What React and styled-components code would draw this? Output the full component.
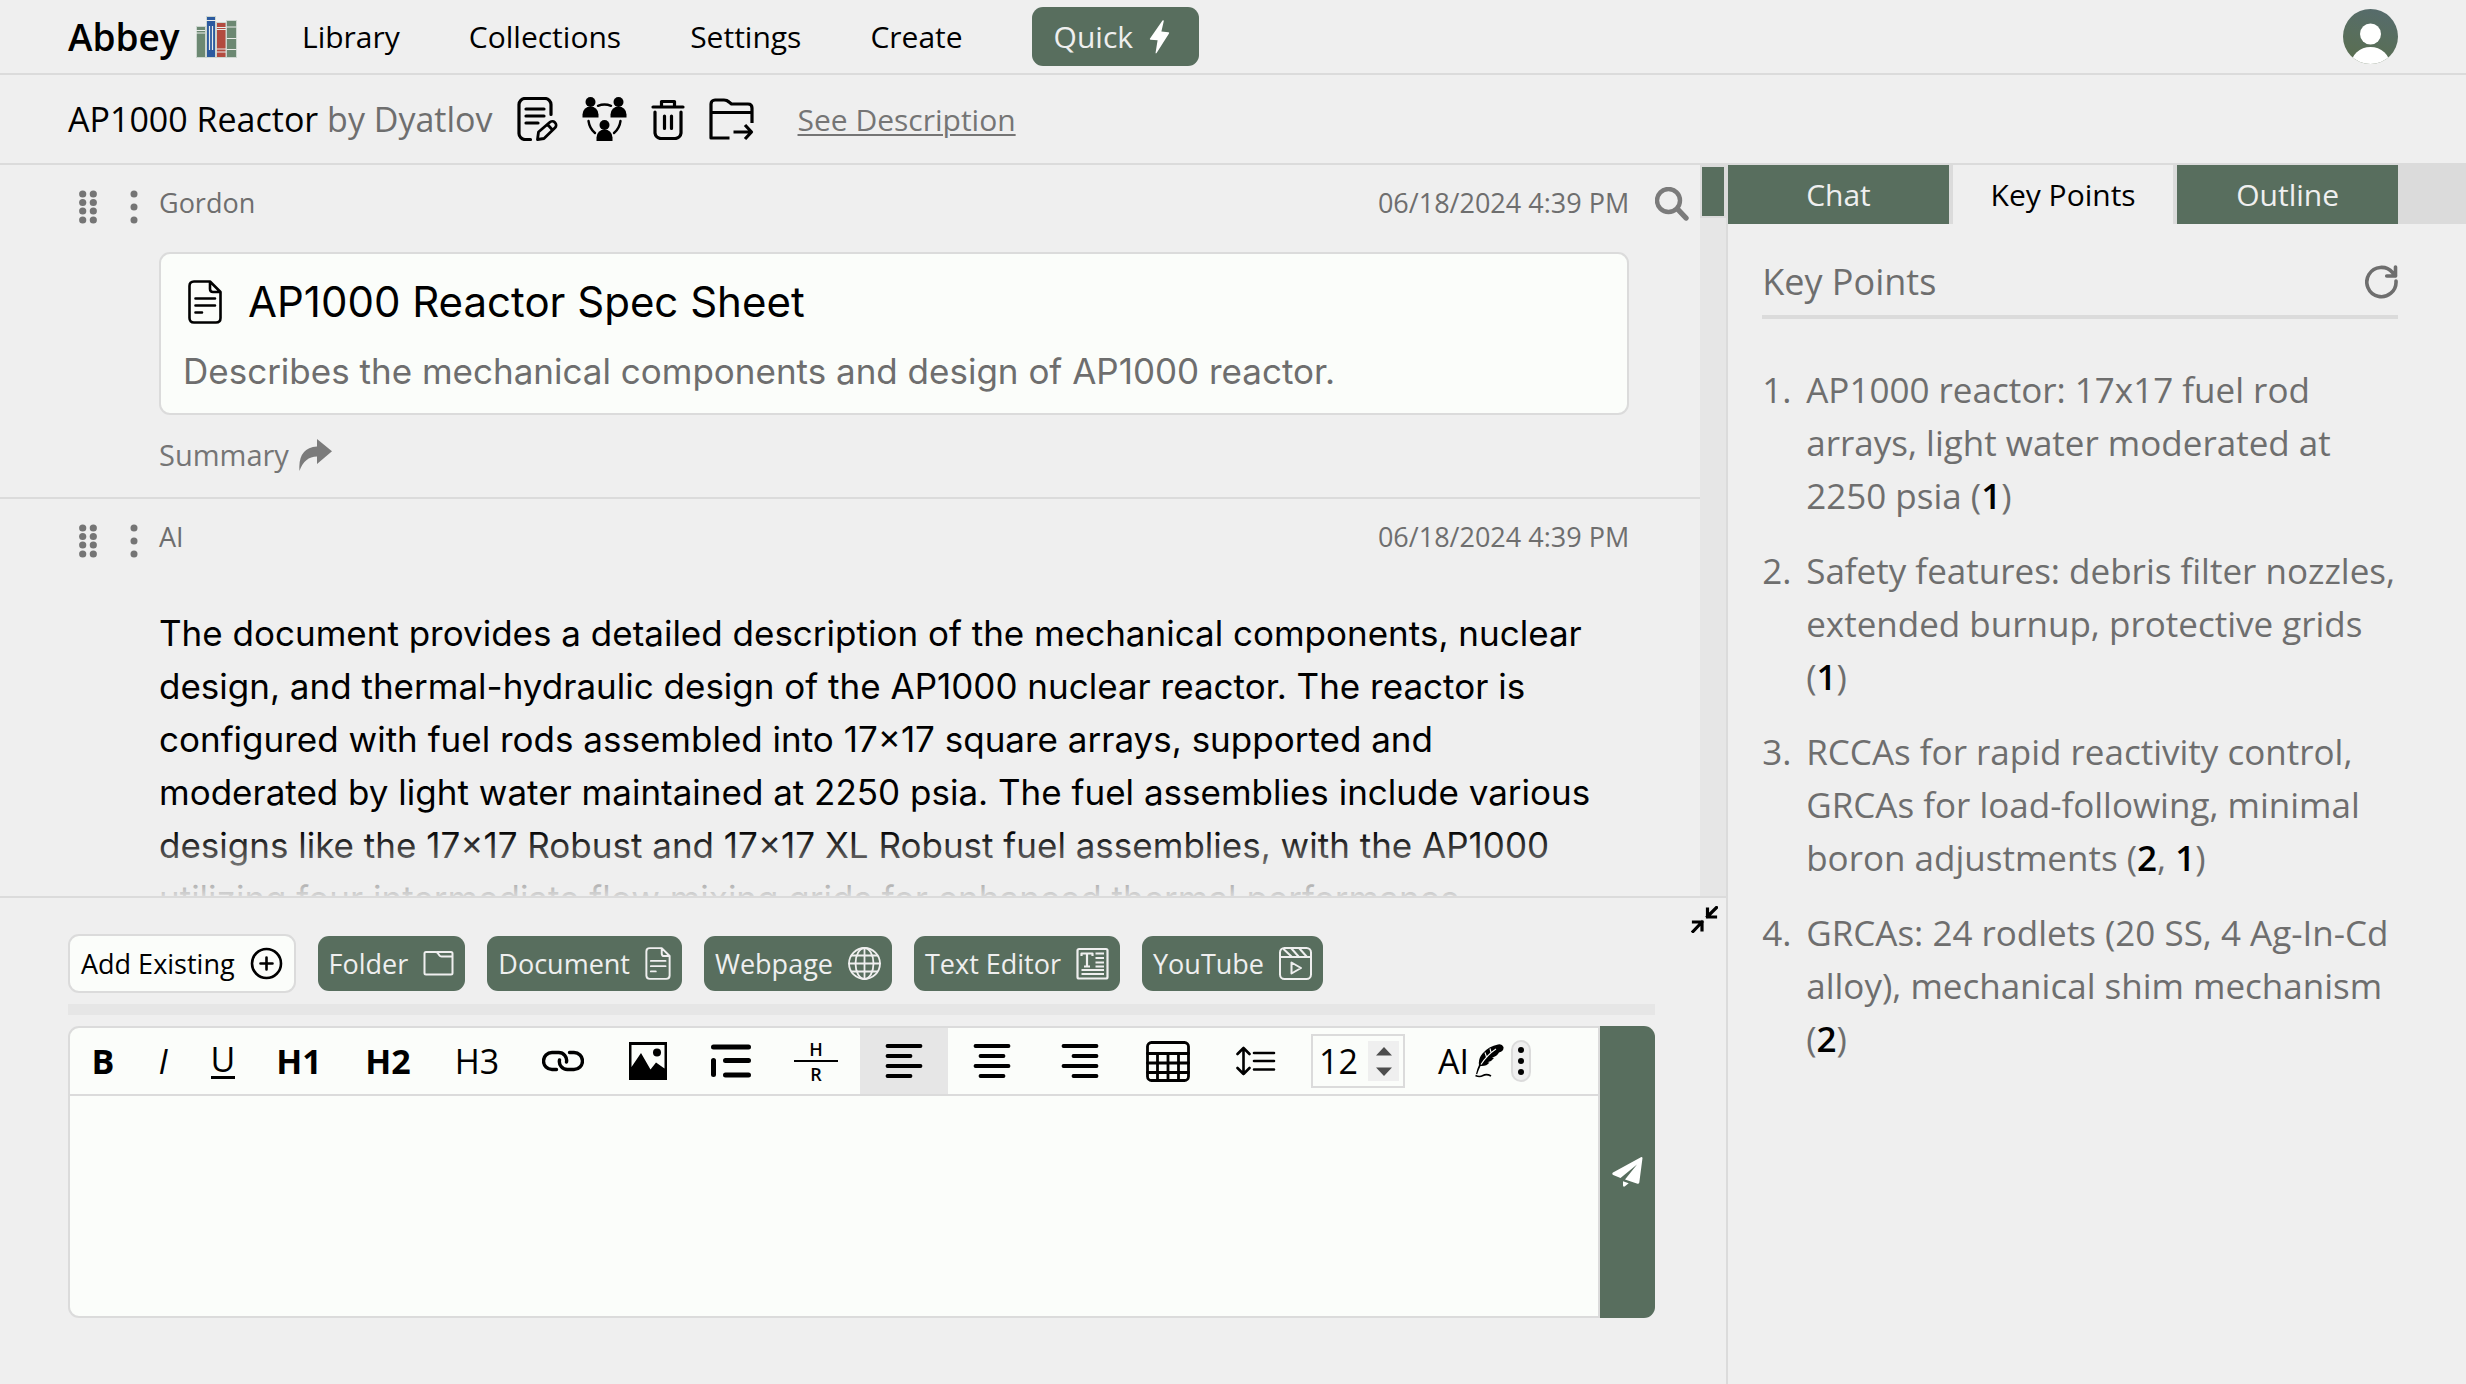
import React from "react";
import styled, { createGlobalStyle } from "styled-components";

const c = {
  bg: "#efefef",
  line: "#dbdbdb",
  shade: "#e6e6e6",
  green: "#586e5e",
  paper: "#fbfdfa",
  muted: "#6e6e6e",
};

const ui = `"Open Sans", "Noto Sans", sans-serif`;
const copy = `Inter, "Noto Sans", sans-serif`;

const Global = createGlobalStyle`
  *, *::before, *::after { box-sizing: border-box; }
  body { margin: 0; background: ${c.bg}; color: #000; font-family: ${ui}; font-size: 30px; font-weight: 400; }
  button, input, textarea { font: inherit; color: inherit; margin: 0; }
  button { border: 0; padding: 0; background: none; cursor: pointer; }
  a { color: inherit; text-decoration: none; }
  svg { display: block; flex: none; }
`;

const Shell = styled.div`
  height: 100vh;
  display: flex;
  flex-direction: column;
  overflow: hidden;
`;

const Header = styled.header`
  display: flex;
  align-items: center;
  height: 75px;
  padding: 0 68px;
  border-bottom: 2px solid ${c.line};
`;

const Brand = styled.a`
  display: flex;
  align-items: center;
  gap: 16px;
  width: 234px;
  font-size: 37px;
  font-weight: 600;
  line-height: 44px;
`;

const Nav = styled.nav`
  display: flex;
  align-items: center;
  flex: 1;
  gap: 69px;
  line-height: 40px;
`;

const QuickButton = styled.button`
  display: flex;
  align-items: center;
  gap: 16px;
  height: 59px;
  padding: 0 29px 0 22px;
  border-radius: 11px;
  background: ${c.green};
  color: ${c.bg};
`;

const TitleBar = styled.div`
  display: flex;
  align-items: center;
  gap: 24px;
  height: 90px;
  padding: 0 68px;
  border-bottom: 2px solid ${c.line};
`;

const Title = styled.h1`
  margin: 0;
  font-size: 34px;
  font-weight: 400;
  line-height: 44px;
  white-space: nowrap;
  span { color: ${c.muted}; }
`;

const DescriptionLink = styled.a`
  margin-left: 20px;
  color: #757575;
  text-decoration: underline;
  text-decoration-thickness: 2px;
  text-underline-offset: 3px;
`;

const Body = styled.div`
  flex: 1;
  min-height: 0;
  display: flex;
`;

const Workspace = styled.main`
  flex: 1;
  min-width: 0;
  display: flex;
  flex-direction: column;
`;

const FeedPane = styled.section`
  flex: 1;
  min-height: 0;
  display: flex;
  border-bottom: 2px solid ${c.line};
`;

const Feed = styled.div`
  position: relative;
  flex: 1;
  min-width: 0;
  overflow: hidden;
`;

const Fade = styled.div`
  position: absolute;
  inset: auto 0 0 0;
  height: 66px;
  background: linear-gradient(to bottom, rgba(239, 239, 239, 0), rgba(239, 239, 239, 0.9));
  pointer-events: none;
`;

const ScrollTrack = styled.div`
  width: 26px;
  background: ${c.shade};
`;

const ScrollThumb = styled.div`
  height: 53px;
  border: 2px solid ${c.line};
  background: ${c.green};
`;

const Entry = styled.article`
  padding: 22px 71px 25px 68px;
  border-bottom: 2px solid ${c.line};
`;

const EntryHead = styled.div`
  display: flex;
  align-items: flex-start;
  height: 36px;
  color: ${c.muted};
  font-size: 27px;
  line-height: 32px;
`;

const Handles = styled.div`
  display: flex;
  align-items: flex-end;
  gap: 33px;
  width: 91px;
  height: 37px;
  padding-left: 11px;
`;

const Author = styled.span`
  flex: 1;
`;

const SearchButton = styled.button`
  width: 33px;
  margin: 0 -59px 0 26px;
  color: #7b7b7b;
`;

const EntryBody = styled.div`
  padding-left: 91px;
`;

const Card = styled.div`
  margin-top: 29px;
  padding: 22px 22px 15px;
  border: 2px solid ${c.line};
  border-radius: 11px;
  background: ${c.paper};
  font-family: ${copy};
`;

const CardTitle = styled.h2`
  display: flex;
  align-items: center;
  gap: 26px;
  margin: 0 0 17px;
  padding-left: 5px;
  font-size: 42px;
  font-weight: 400;
  line-height: 52px;
`;

const CardText = styled.p`
  margin: 0;
  color: ${c.muted};
  font-size: 35px;
  line-height: 53px;
`;

const SummaryButton = styled.button`
  display: flex;
  align-items: center;
  gap: 10px;
  margin-top: 22px;
  margin-bottom: -1px;
  color: #757575;
  font-size: 29px;
  line-height: 36px;
`;

const Prose = styled.p`
  margin: 50px 0 0;
  padding-right: 16px;
  font-family: ${copy};
  font-size: 35px;
  line-height: 53px;
`;

const Composer = styled.section`
  display: flex;
  align-items: flex-start;
  justify-content: space-between;
`;

const ComposerMain = styled.div`
  flex: 1;
  min-width: 0;
  padding: 36px 0 66px 68px;
`;

const Collapse = styled.button`
  width: 71px;
  padding: 8px 8px 0 36px;
`;

const Sources = styled.div`
  display: flex;
  align-items: center;
  gap: 22px;
`;

const SourceButton = styled.button`
  display: flex;
  align-items: center;
  gap: 15px;
  height: ${(p) => (p.$plain ? "59px" : "55px")};
  padding: 0 11px;
  border: ${(p) => (p.$plain ? `2px solid ${c.line}` : "0")};
  border-radius: 11px;
  background: ${(p) => (p.$plain ? c.paper : c.green)};
  color: ${(p) => (p.$plain ? "#000" : c.bg)};
  font-size: 27px;
  line-height: 36px;
  white-space: nowrap;
`;

const Divider = styled.div`
  height: 11px;
  margin: 11px 0;
  background: ${c.shade};
`;

const Editor = styled.div`
  display: flex;
`;

const EditorBox = styled.div`
  flex: 1;
  min-width: 0;
  border: 2px solid ${c.line};
  border-radius: 11px 0 0 11px;
  background: ${c.paper};
  overflow: hidden;
`;

const Toolbar = styled.div`
  display: flex;
  align-items: center;
  height: 68px;
  border-bottom: 2px solid ${c.line};
`;

const Tool = styled.button`
  display: flex;
  align-items: center;
  justify-content: center;
  width: ${(p) => p.$w}px;
  height: 66px;
  background: ${(p) => (p.$active ? c.shade : "transparent")};
  font-size: 34px;
  font-weight: ${(p) => (p.$bold ? 700 : 400)};
  font-style: ${(p) => (p.$italic ? "italic" : "normal")};
  line-height: 44px;
`;

const Underlined = styled.span`
  border-bottom: 3px solid #000;
  line-height: 33px;
`;

const Rule = styled.span`
  display: flex;
  flex-direction: column;
  align-items: center;
  width: 44px;
  font-size: 18px;
  font-weight: 600;
  line-height: 18px;
`;

const RuleTop = styled.span`
  width: 100%;
  padding-bottom: 2px;
  border-bottom: 2px solid #000;
`;

const RuleBottom = styled.span`
  padding-top: 3px;
`;

const SizeField = styled.label`
  display: flex;
  align-items: center;
  width: 94px;
  height: 54px;
  margin-left: 11px;
  padding: 0 4px 0 6px;
  border: 2px solid ${c.line};
  font-size: 34px;
  input {
    width: 49px;
    padding: 0;
    border: 0;
    outline: 0;
    background: none;
    appearance: textfield;
  }
  input::-webkit-inner-spin-button { appearance: none; }
`;

const Stepper = styled.span`
  display: flex;
  flex-direction: column;
  width: 33px;
  height: 40px;
  background: ${c.bg};
  button { flex: 1; display: flex; align-items: center; justify-content: center; }
`;

const AiTools = styled.div`
  display: flex;
  align-items: center;
  gap: 7px;
  margin-left: 33px;
`;

const AiButton = styled.button`
  display: flex;
  align-items: center;
  gap: 6px;
  font-size: 34px;
  line-height: 44px;
`;

const MoreButton = styled.button`
  display: flex;
  align-items: center;
  justify-content: center;
  width: 20px;
  height: 42px;
  border: 2px solid ${c.line};
  border-radius: 10px;
  background: ${c.bg};
`;

const TextArea = styled.textarea`
  display: block;
  width: 100%;
  height: 220px;
  padding: 22px;
  border: 0;
  outline: 0;
  resize: none;
  background: transparent;
`;

const SendButton = styled.button`
  display: flex;
  align-items: center;
  justify-content: center;
  width: 55px;
  border-radius: 0 11px 11px 0;
  background: ${c.green};
`;

const Side = styled.aside`
  width: 30%;
  min-width: 600px;
  border-left: 2px solid ${c.line};
`;

const Tabs = styled.div`
  display: flex;
  gap: 4px;
  padding-right: 68px;
  background: ${c.line};
`;

const Tab = styled.button`
  flex: 1;
  height: 59px;
  background: ${(p) => (p.$active ? c.bg : c.green)};
  color: ${(p) => (p.$active ? "#000" : c.bg)};
  line-height: 40px;
`;

const SideBody = styled.div`
  padding: 34px 68px 0 34px;
`;

const SideHead = styled.div`
  display: flex;
  align-items: center;
  justify-content: space-between;
  height: 61px;
  padding-bottom: 10px;
  border-bottom: 4px solid ${c.line};
  color: ${c.muted};
`;

const SideTitle = styled.h2`
  margin: 0;
  font-size: 36px;
  font-weight: 400;
  line-height: 48px;
`;

const Points = styled.ol`
  display: flex;
  flex-direction: column;
  gap: 22px;
  margin: 44px 0 0;
  padding: 0;
  list-style: none;
  counter-reset: point;
  color: ${c.muted};
  font-size: 35px;
  line-height: 53px;
`;

const Point = styled.li`
  display: flex;
  counter-increment: point;
  &::before { content: counter(point) "."; flex: 0 0 44px; }
`;

const Cite = styled.a`
  color: #000;
  font-weight: 600;
`;

const Hidden = styled.span`
  position: absolute;
  width: 1px;
  height: 1px;
  overflow: hidden;
  clip-path: inset(50%);
`;

const line = { fill: "none", stroke: "currentColor", strokeLinecap: "round", strokeLinejoin: "round" };

const Books = () => (
  <svg width="41" height="42" viewBox="0 0 41 42">
    <g stroke="#cdd6d0" strokeWidth="1">
      <path fill="#6c8872" d="M.5 10.500h9v31h-9z" />
      <path fill="#2c5a9f" d="M10.500.5h9v41h-9z" />
      <path fill="#b34b3f" d="M20.500 6.500h9.500v35h-9.500z" />
      <path fill="#6c8872" d="M30.500 4.500h10v37h-10z" />
    </g>
    <path stroke="#e9ece9" strokeWidth="1.200" d="M0 14.500h9M0 17h9M10 4.500h10M13.500 10v24M16.500 10v24M20.500 11.500h9.500M20.500 13.500h9.500M20.500 33h9.500M20.500 36h9.500M30.500 11h10M30.500 22.500h10M30.500 33.500h10" />
  </svg>
);

const Bolt = () => (
  <svg width="21" height="34" viewBox="0 0 21 34" fill="#fff">
    <path d="M13.500.5 1 18.500q-.5 1 .6 1.200l7 .6-2 12.200q0 1.500 1 .5L20 13.500q.6-1.200-.6-1.300l-7-.7 2.400-10.500q0-1.200-1.300-.5z" />
  </svg>
);

const Avatar = () => (
  <svg width="55" height="55" viewBox="0 0 55 55" role="img" aria-label="Account">
    <defs>
      <linearGradient id="avatar" x1=".7" y1="0" x2=".4" y2="1">
        <stop offset="0" stopColor="#566b6c" />
        <stop offset=".5" stopColor="#586e5e" />
        <stop offset="1" stopColor="#5a6e50" />
      </linearGradient>
      <clipPath id="round"><circle cx="27.500" cy="27.500" r="27.500" /></clipPath>
    </defs>
    <g clipPath="url(#round)">
      <path fill="url(#avatar)" d="M0 0h55v55H0z" />
      <circle cx="27.500" cy="25" r="10.500" fill="#fff" />
      <ellipse cx="27.500" cy="56" rx="19.500" ry="18" fill="#fff" />
    </g>
  </svg>
);

const EditDoc = () => (
  <svg width="41" height="44" viewBox="0 0 41 44" {...line} strokeWidth="3.200">
    <path d="M13.500 42.500H8a6 6 0 0 1-6-6v-29a6 6 0 0 1 6-6h20a6 6 0 0 1 6 6v10M9 12h18M9 19h18M9 26h12" />
    <path d="m21.500 35 11-9.500a3.800 3.800 0 0 1 5.500 5.300L27 41.500l-6.500 1zM31 28l4.500 5" strokeWidth="2.800" />
  </svg>
);

const Group = () => (
  <svg width="45" height="44" viewBox="0 0 45 44">
    <g fill="#000">
      <circle cx="8.500" cy="5" r="5" /><path d="M.5 20.500v-3a8 8 0 0 1 16 0v3z" />
      <circle cx="36.500" cy="5" r="5" /><path d="M28.500 20.500v-3a8 8 0 0 1 16 0v3z" />
      <circle cx="22.500" cy="28" r="5" /><path d="M14.500 44v-3.500a8 8 0 0 1 16 0V44z" />
    </g>
    <path {...line} stroke="#000" strokeWidth="2.400" d="M16 8.800q6.500-2.500 13 0M6.500 24q1 7.500 6.500 12M38.500 24q-1 7.500-6.500 12" />
  </svg>
);

const Trash = () => (
  <svg width="34" height="42" viewBox="0 0 34 42" {...line} strokeWidth="3.200">
    <path d="M2 9h30M10.500 8V3.500h13V8M4 14v21a6 6 0 0 0 6 5.500h14a6 6 0 0 0 6-5.500V14M13.500 18v12.500M20.500 18v12.500" />
  </svg>
);

const MoveFolder = () => (
  <svg width="45" height="43" viewBox="0 0 45 43" fill="none" stroke="#000" strokeWidth="3.200">
    <path strokeLinejoin="round" d="M20.500 40H2V6a4 4 0 0 1 4-4h9q3 0 5 2l2.500 2H39q4 0 4 4v15M2 14.500h41" />
    <path d="M24.500 34H42M36 27l6.500 7-6.500 7" strokeLinejoin="round" />
  </svg>
);

const Grip = () => (
  <svg width="18" height="34" viewBox="0 0 18 34" fill="#757575">
    {[4, 12.500, 21, 30].map((y) => <g key={y}><circle cx="3.700" cy={y} r="3.600" /><circle cx="14.300" cy={y} r="3.600" /></g>)}
  </svg>
);

const Kebab = ({ h = 34, r = 3.500, gap = 13, color = "#757575" }) => (
  <svg width="8" height={h} viewBox={`0 0 8 ${h}`} fill={color}>
    {[-1, 0, 1].map((n) => <circle key={n} cx="4" cy={h / 2 + n * gap} r={r} />)}
  </svg>
);

const Magnifier = () => (
  <svg width="34" height="34" viewBox="0 0 34 34" {...line}>
    <circle cx="13.500" cy="13.500" r="11.500" strokeWidth="4.400" /><path strokeWidth="5.400" d="m22.500 22 8.500 9" />
  </svg>
);

const Doc = ({ w = 34, h = 44, s = 2.600 }) => (
  <svg width={w} height={h} viewBox="0 0 34 44" {...line} strokeWidth={s}>
    <path d="M6 1.500h16l10.500 10.500v26q0 4.500-4.500 4.500H6q-4.500 0-4.500-4.500V6Q1.500 1.500 6 1.500zM22 2v7q0 3 3 3h7M7.500 18.500H27M7.500 25.500H27M7.500 32.500H14" />
  </svg>
);

const Reply = () => (
  <svg width="33" height="32" viewBox="0 0 33 32" fill="#7b7b7b">
    <path d="M18 0 33 12.300 18 25v-7.500Q5.500 17.500.5 32-1.500 9 18 7.500z" />
  </svg>
);

const Shrink = () => (
  <svg width="27" height="27" viewBox="0 0 27 27" {...line} strokeWidth="3.200" strokeLinecap="square" strokeLinejoin="miter">
    <path d="M25.500 1.500 16.500 10.500M16.500 3v8h8M2 25.500l9-9.500M2.500 16h8.500v8" />
  </svg>
);

const PlusCircle = () => (
  <svg width="33" height="33" viewBox="0 0 33 33" {...line} strokeWidth="2.600">
    <circle cx="16.500" cy="16.500" r="14.500" /><path d="M16.500 10.500v12M10.500 16.500h12" />
  </svg>
);

const Folder = () => (
  <svg width="31" height="33" viewBox="0 0 31 33" {...line} strokeWidth="2">
    <path d="M3 5h9.500q1.500 0 2.200 1l1.800 2.500q.6 1 2 1h11V26q0 1.500-1.500 1.500H3q-1.500 0-1.500-1.500V6.500Q1.500 5 3 5zM14 5h14q1.500 0 1.500 1.500v3" />
  </svg>
);

const Globe = () => (
  <svg width="33" height="33" viewBox="0 0 33 33" {...line} strokeWidth="1.800">
    <circle cx="16.500" cy="16.500" r="15.500" /><ellipse cx="16.500" cy="16.500" rx="9" ry="15.500" />
    <path d="M16.500 1v31M1 16.500h31M4 8.500h25M4 24.500h25" />
  </svg>
);

const TextDoc = () => (
  <svg width="33" height="33" viewBox="0 0 33 33" {...line} strokeWidth="2.200">
    <rect x="1.500" y="2" width="30" height="29.500" rx="1.500" />
    <path strokeLinecap="butt" d="M5.500 9V6.500h11V9M11 6.500v13M8 19.500h6M19.500 6.500h8.500M19.500 11h8.500M19.500 15.500h8.500M19.500 19.500h8.500M5.500 23h22.500M5.500 27h22.500" />
  </svg>
);

const Reel = () => (
  <svg width="33" height="33" viewBox="0 0 33 33" {...line} strokeWidth="2">
    <rect x="1" y="1" width="31" height="31" rx="4.500" />
    <path d="M1 10h31M5 2.500l8 7.500M12 1l8 9M20 1l8 9M12.500 15.500v11l9.500-5.500z" />
  </svg>
);

const LinkIcon = () => (
  <svg width="42" height="22" viewBox="0 0 42 22" {...line} strokeWidth="3.400">
    <path d="M14.500 19.500H10a8.300 8.300 0 0 1 0-17h6.500a8 8 0 0 1 8 9.500M27.500 2.500H32a8.300 8.300 0 0 1 0 17h-6.500a8 8 0 0 1-8-9.500" />
  </svg>
);

const Picture = () => (
  <svg width="38" height="38" viewBox="0 0 38 38">
    <path fillRule="evenodd" d="M0 0h38v38H0zM2.500 3v22l9.500-14 9.500 16.500 5.500-7 8.500 6V3z" />
    <circle cx="28" cy="10.500" r="4" />
  </svg>
);

const Quote = () => (
  <svg width="40" height="34" viewBox="0 0 40 34" {...line} strokeWidth="5">
    <path d="M2.500 3h35M14.500 16.500h23M14.500 31h23M2.500 16.500v14" />
  </svg>
);

const alignStart = { left: 2.500, center: 7.500, right: 12.500 };

const Align = ({ to }) => (
  <svg width="38" height="36" viewBox="0 0 38 36" {...line} strokeWidth="3.800">
    <path d={`M2.500 3h33M${alignStart[to]} 13h23M2.500 23h33M${alignStart[to]} 33h23`} />
  </svg>
);

const Table = () => (
  <svg width="44" height="41" viewBox="0 0 44 41" {...line} strokeWidth="2.800">
    <rect x="1.500" y="1.500" width="41" height="38" rx="4" />
    <path d="M1.500 12.500h41M1.500 22h41M1.500 31.500h41M11.500 12.500v27M22 12.500v27M32.500 12.500v27" />
  </svg>
);

const Spacing = () => (
  <svg width="40" height="30" viewBox="0 0 40 30" {...line} strokeWidth="2.600">
    <path d="M7.500 2v26M1.500 8l6-6 6 6M1.500 22l6 6 6-6M18 7h20M18 15h20M18 23.500h20" />
  </svg>
);

const Quill = () => (
  <svg width="29" height="34" viewBox="0 0 29 34">
    <path d="M28.500 3Q27-.5 23 .5 14 2 7.500 9.500 3 15 4 21q-2 4-3 9l1.200.3Q3.500 26 5.500 22q6 .5 9-3.500l-2-.3q4.500-1 6.500-4.200l-2-.5q5-1 7-5 5-1 4.500-5.500z" />
    <path fill="none" stroke="#fbfdfa" strokeWidth="1.100" d="M6 20.500Q12 11 21 5M10 8.500l1.500 4.500M15 4.500l1 4" />
    <path fill="none" stroke="#000" strokeWidth="1.600" d="M.5 31.500q4 2 7.500 0t8 .5" />
  </svg>
);

const Caret = ({ up }) => (
  <svg width="16" height="9" viewBox="0 0 16 9" fill="#4d4d4d"><path d={up ? "M0 8.500 8 0l8 8.500z" : "M0 .5 8 9l8-8.500z"} /></svg>
);

const Plane = () => (
  <svg width="31" height="30" viewBox="0 0 31 30" fill="#fff">
    <path d="M30.500 1q-.3-1.300-1.600-.7L1 15.500q-1.500 1.300.2 2.500l7.300 3L25 7.500 13 22.500l12.500 4.300q1.500.2 1.800-1.300zM11 24.300v4.200q.5 2 2 .8l3.700-3z" />
  </svg>
);

const Refresh = () => (
  <svg width="33" height="34" viewBox="0 0 33 34" {...line} strokeWidth="3.600">
    <path d="M31 16a14.600 14.600 0 1 1-3.500-8.500l3 3.300M30.500 2v9h-8.800" />
  </svg>
);

const navItems = ["Library", "Collections", "Settings", "Create"];
const sources = [
  ["Folder", <Folder />],
  ["Document", <Doc w={26} h={33} s={2.600} />],
  ["Webpage", <Globe />],
  ["Text Editor", <TextDoc />],
  ["YouTube", <Reel />],
];
const points = [
  ["AP1000 reactor: 17x17 fuel rod arrays, light water moderated at 2250 psia", [1]],
  ["Safety features: debris filter nozzles, extended burnup, protective grids", [1]],
  ["RCCAs for rapid reactivity control, GRCAs for load-following, minimal boron adjustments", [2, 1]],
  ["GRCAs: 24 rodlets (20 SS, 4 Ag-In-Cd alloy), mechanical shim mechanism", [2]],
];

function Head({ author, children }) {
  return (
    <EntryHead>
      <Handles>
        <button aria-label="Drag"><Grip /></button>
        <button aria-label="More"><Kebab /></button>
      </Handles>
      <Author>{author}</Author>
      <time>06/18/2024 4:39 PM</time>
      {children}
    </EntryHead>
  );
}

export default function App() {
  return (
    <Shell>
      <Global />
      <Header>
        <Brand href="#">Abbey <Books /></Brand>
        <Nav>
          {navItems.map((n) => <a key={n} href="#">{n}</a>)}
          <QuickButton>Quick <Bolt /></QuickButton>
        </Nav>
        <button aria-label="Account"><Avatar /></button>
      </Header>

      <TitleBar>
        <Title>AP1000 Reactor <span>by Dyatlov</span></Title>
        <button aria-label="Edit"><EditDoc /></button>
        <button aria-label="Share"><Group /></button>
        <button aria-label="Delete"><Trash /></button>
        <button aria-label="Move"><MoveFolder /></button>
        <DescriptionLink href="#">See Description</DescriptionLink>
      </TitleBar>

      <Body>
        <Workspace>
          <FeedPane>
            <Feed>
              <Entry>
                <Head author="Gordon">
                  <SearchButton aria-label="Search"><Magnifier /></SearchButton>
                </Head>
                <EntryBody>
                  <Card>
                    <CardTitle><Doc />AP1000 Reactor Spec Sheet</CardTitle>
                    <CardText>Describes the mechanical components and design of AP1000 reactor.</CardText>
                  </Card>
                  <SummaryButton>Summary <Reply /></SummaryButton>
                </EntryBody>
              </Entry>
              <Entry>
                <Head author="AI" />
                <EntryBody>
                  <Prose>
                    The document provides a detailed description of the mechanical components, nuclear design,
                    and thermal-hydraulic design of the AP1000 nuclear reactor. The reactor is configured with
                    fuel rods assembled into 17×17 square arrays, supported and moderated by light water
                    maintained at 2250 psia. The fuel assemblies include various designs like the 17×17 Robust
                    and 17×17 XL Robust fuel assemblies, with the AP1000 utilizing four intermediate flow mixing
                    grids for enhanced thermal performance.
                  </Prose>
                </EntryBody>
              </Entry>
              <Fade />
            </Feed>
            <ScrollTrack><ScrollThumb /></ScrollTrack>
          </FeedPane>

          <Composer>
            <ComposerMain>
              <Sources>
                <SourceButton $plain>Add Existing <PlusCircle /></SourceButton>
                {sources.map(([name, icon]) => <SourceButton key={name}>{name} {icon}</SourceButton>)}
              </Sources>
              <Divider />
              <Editor>
                <EditorBox>
                  <Toolbar>
                    <Tool $w={66} $bold>B</Tool>
                    <Tool $w={54} $italic>I</Tool>
                    <Tool $w={66}><Underlined>U</Underlined></Tool>
                    <Tool $w={86} $bold>H1</Tool>
                    <Tool $w={92} $bold>H2</Tool>
                    <Tool $w={86}>H3</Tool>
                    <Tool $w={86} aria-label="Link"><LinkIcon /></Tool>
                    <Tool $w={84} aria-label="Image"><Picture /></Tool>
                    <Tool $w={82} aria-label="Quote"><Quote /></Tool>
                    <Tool $w={88}><Rule><RuleTop>H</RuleTop><RuleBottom>R</RuleBottom></Rule></Tool>
                    <Tool $w={88} $active aria-label="Align left"><Align to="left" /></Tool>
                    <Tool $w={88} aria-label="Align center"><Align to="center" /></Tool>
                    <Tool $w={88} aria-label="Align right"><Align to="right" /></Tool>
                    <Tool $w={88} aria-label="Table"><Table /></Tool>
                    <Tool $w={88} aria-label="Line spacing"><Spacing /></Tool>
                    <SizeField>
                      <Hidden>Font size</Hidden>
                      <input type="number" defaultValue={12} />
                      <Stepper>
                        <button aria-label="Increase"><Caret up /></button>
                        <button aria-label="Decrease"><Caret /></button>
                      </Stepper>
                    </SizeField>
                    <AiTools>
                      <AiButton>AI <Quill /></AiButton>
                      <MoreButton aria-label="More AI tools"><Kebab h={34} r={3} gap={11} color="#000" /></MoreButton>
                    </AiTools>
                  </Toolbar>
                  <TextArea aria-label="Message" />
                </EditorBox>
                <SendButton aria-label="Send"><Plane /></SendButton>
              </Editor>
            </ComposerMain>
            <Collapse aria-label="Collapse"><Shrink /></Collapse>
          </Composer>
        </Workspace>

        <Side>
          <Tabs>
            <Tab>Chat</Tab>
            <Tab $active>Key Points</Tab>
            <Tab>Outline</Tab>
          </Tabs>
          <SideBody>
            <SideHead>
              <SideTitle>Key Points</SideTitle>
              <button aria-label="Refresh"><Refresh /></button>
            </SideHead>
            <Points>
              {points.map(([text, cites]) => (
                <Point key={text}>
                  <span>
                    {text} ({cites.map((n, i) => (
                      <React.Fragment key={n}>{i > 0 && ", "}<Cite href="#">{n}</Cite></React.Fragment>
                    ))})
                  </span>
                </Point>
              ))}
            </Points>
          </SideBody>
        </Side>
      </Body>
    </Shell>
  );
}
